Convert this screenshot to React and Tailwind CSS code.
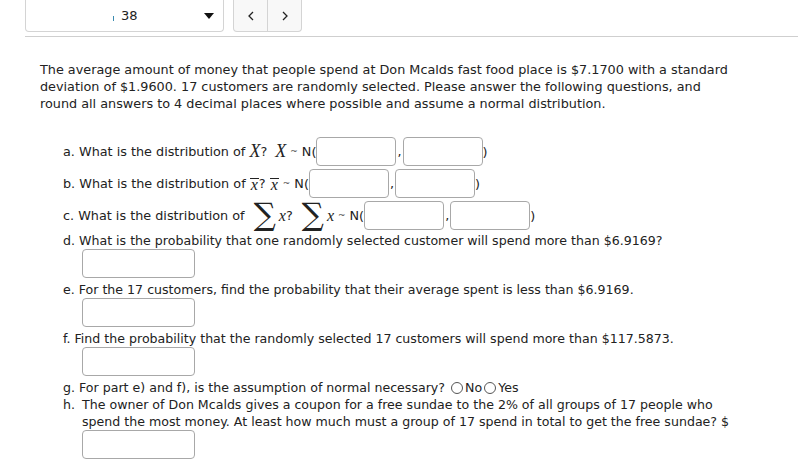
const font = { fontFamily: '"DejaVu Sans", Verdana, sans-serif' }

function Box() {
  return <span className="inline-block w-[80px] h-[29px] border border-[#a8a8a8] rounded-[4px] bg-white align-middle" />
}

function BlockBox() {
  return <div className="w-[113px] h-[29px] border border-[#a8a8a8] rounded-[4px] bg-white ml-[19px]" />
}

function Radio() {
  return <span className="inline-block w-[12px] h-[12px] rounded-full border border-[#555] bg-white mx-[2px]" />
}

const mathI = 'font-["Liberation_Serif"] italic'

function Pair() {
  return (
    <>
      <span>N(</span>
      <Box />
      <span className="mx-[1px]">,</span>
      <Box />
      <span>)</span>
    </>
  )
}

function Tilde() {
  return <span className="mx-[4px] text-[9px] text-[#444]">~</span>
}

function Xbar() {
  return (
    <span className={`${mathI} text-[16px] inline-block border-t border-[#222] leading-[11px] px-[1px] mt-[1px]`}>x</span>
  )
}

function Sum() {
  return <span className="font-['DejaVu_Serif'] text-[31px] leading-[17px] ml-[5px] mr-[3px] -mt-[2px]">∑</span>
}

export default function App() {
  return (
    <div className="w-[798px] h-[468px] bg-white text-[#222] text-[12.6px] leading-[17px] overflow-hidden" style={font}>
      <div className="ml-[25px] border-b border-[#cfcfcf] pb-[4px] flex gap-[9px]">
        <div className="w-[199px] h-[32px] border border-t-0 border-[#d4d4d4] rounded-b-[4px] flex items-center pl-[87px] pr-[9px]">
          <span className="inline-block w-[1px] h-[5px] bg-[#3a8bb0] mr-[7px] mt-[6px]" />
          <span className="text-[13px]">38</span>
          <span className="ml-auto w-0 h-0 border-l-[5px] border-r-[5px] border-t-[6px] border-l-transparent border-r-transparent border-t-[#111]" />
        </div>
        <div className="flex h-[32px] border border-t-0 border-[#d4d4d4] rounded-b-[4px] bg-[#f8f8f8]">
          <div className="w-[34px] flex items-center justify-center border-r border-[#d4d4d4]">
            <svg width="8" height="10" viewBox="0 0 8 10"><path d="M6 1 L2 5 L6 9" fill="none" stroke="#222" strokeWidth="1.3" /></svg>
          </div>
          <div className="w-[33px] flex items-center justify-center">
            <svg width="8" height="10" viewBox="0 0 8 10"><path d="M2 1 L6 5 L2 9" fill="none" stroke="#222" strokeWidth="1.3" /></svg>
          </div>
        </div>
      </div>

      <div className="pl-[40px] mt-[24px]">
        <p className="w-[694px] text-[12.8px]">
          The average amount of money that people spend at Don Mcalds fast food place is $7.1700 with a standard deviation of $1.9600. 17 customers are randomly selected. Please answer the following questions, and round all answers to 4 decimal places where possible and assume a normal distribution.
        </p>

        <div className="ml-[23px] mt-[23px]">
          <div className="h-[32px] flex items-center whitespace-nowrap text-[12.8px]">
            <span>a. What is the distribution of&nbsp;</span>
            <span className={`${mathI} text-[18px]`}>X</span>
            <span>?&nbsp;</span>
            <span className={`${mathI} text-[18px] ml-[4px]`}>X</span>
            <Tilde />
            <Pair />
          </div>
          <div className="h-[32px] flex items-center whitespace-nowrap text-[12.8px]">
            <span>b. What is the distribution of&nbsp;</span>
            <Xbar />
            <span>?&nbsp;</span>
            <Xbar />
            <Tilde />
            <Pair />
          </div>
          <div className="h-[32px] flex items-center whitespace-nowrap text-[12.8px]">
            <span>c. What is the distribution of&nbsp;</span>
            <Sum />
            <span className={`${mathI} text-[16px]`}>x</span>
            <span>?&nbsp;</span>
            <Sum />
            <span className={`${mathI} text-[16px]`}>x</span>
            <Tilde />
            <Pair />
          </div>

          <div className="mt-[1px]">d. What is the probability that one randomly selected customer will spend more than $6.9169?</div>
          <BlockBox />
          <div className="mt-[3px]">e. For the 17 customers, find the probability that their average spent is less than $6.9169.</div>
          <BlockBox />
          <div className="mt-[3px]">f. Find the probability that the randomly selected 17 customers will spend more than $117.5873.</div>
          <BlockBox />
          <div className="mt-[3px] flex items-center">
            <span>g. For part e) and f), is the assumption of normal necessary?&nbsp;</span>
            <Radio />
            <span>No</span>
            <Radio />
            <span>Yes</span>
          </div>
          <div className="flex w-[680px]">
            <span className="w-[19px] shrink-0">h.</span>
            <span>The owner of Don Mcalds gives a coupon for a free sundae to the 2% of all groups of 17 people who spend the most money. At least how much must a group of 17 spend in total to get the free sundae? $</span>
          </div>
          <BlockBox />
        </div>
      </div>
    </div>
  )
}
